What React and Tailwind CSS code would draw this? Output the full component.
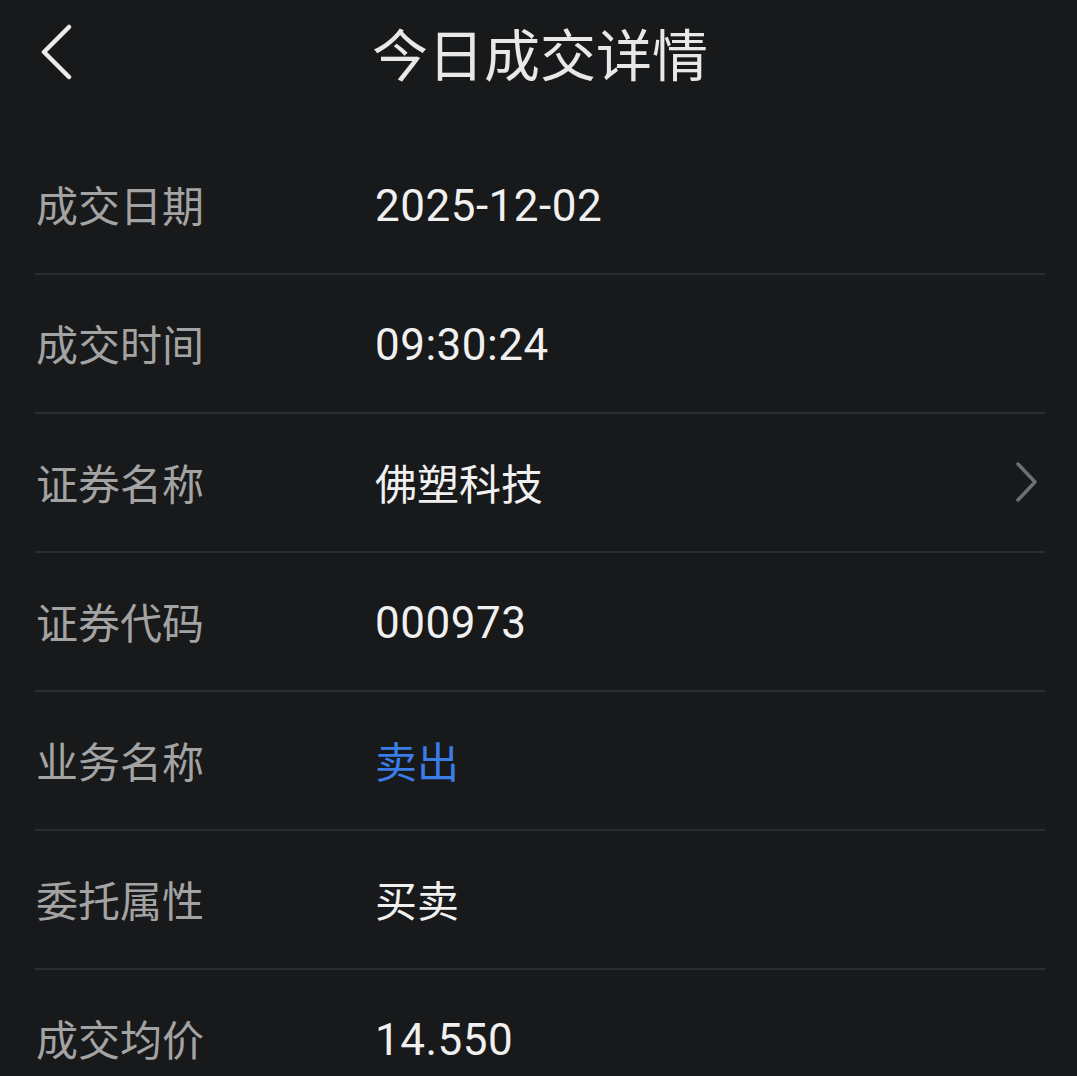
import React from 'react';

const rows = [
  { label: '成交日期', value: '2025-12-02', num: true },
  { label: '成交时间', value: '09:30:24', num: true },
  { label: '证券名称', value: '佛塑科技', arrow: true },
  { label: '证券代码', value: '000973', num: true },
  { label: '业务名称', value: '卖出', blue: true },
  { label: '委托属性', value: '买卖' },
  { label: '成交均价', value: '14.550', num: true },
];

const cjk = { fontFamily: '"Noto Sans CJK SC", "Noto Sans", sans-serif' };
const num = { fontFamily: 'Roboto, "Noto Sans CJK SC", sans-serif' };

const App = () => {
  return (
    <div className="w-[1077px] h-[1076px] overflow-hidden bg-[#18191b]" style={cjk}>
      <div className="relative h-[104px] flex items-center justify-center">
        <button className="absolute left-[34px] top-[19px] p-1">
          <svg width="34" height="60" viewBox="0 0 34 60" fill="none">
            <path d="M31 4 L6 29 L31 54" stroke="#ececec" strokeWidth="4.5" strokeLinecap="round" strokeLinejoin="round" />
          </svg>
        </button>
        <h1 className="text-[56px] leading-none text-[#e8e8e8] font-normal pl-[3px]">今日成交详情</h1>
      </div>

      <div className="mt-[32px] pl-[35px] pr-[32px]">
        {rows.map((r) => (
          <div key={r.label} className="h-[139px] flex items-center border-b-2 border-[#2b2c2f] pb-[2px]">
            <div className="w-[340px] pl-[1px] text-[42px] leading-none text-[#a3a3a3]">{r.label}</div>
            <div
              className={`flex-1 leading-none ${r.blue ? 'text-[#3b7de6]' : 'text-[#f0f0f0]'} ${r.num ? 'text-[44px] pt-[5px] tracking-[0.5px]' : 'text-[42px]'}`}
              style={r.num ? num : cjk}
            >
              {r.value}
            </div>
            {r.arrow && (
              <svg width="26" height="44" viewBox="0 0 26 44" fill="none" className="mr-[5px]">
                <path d="M4 4 L21 22 L4 40" stroke="#6c6f77" strokeWidth="3.5" strokeLinecap="round" strokeLinejoin="round" />
              </svg>
            )}
          </div>
        ))}
      </div>
    </div>
  );
};

export default App;
